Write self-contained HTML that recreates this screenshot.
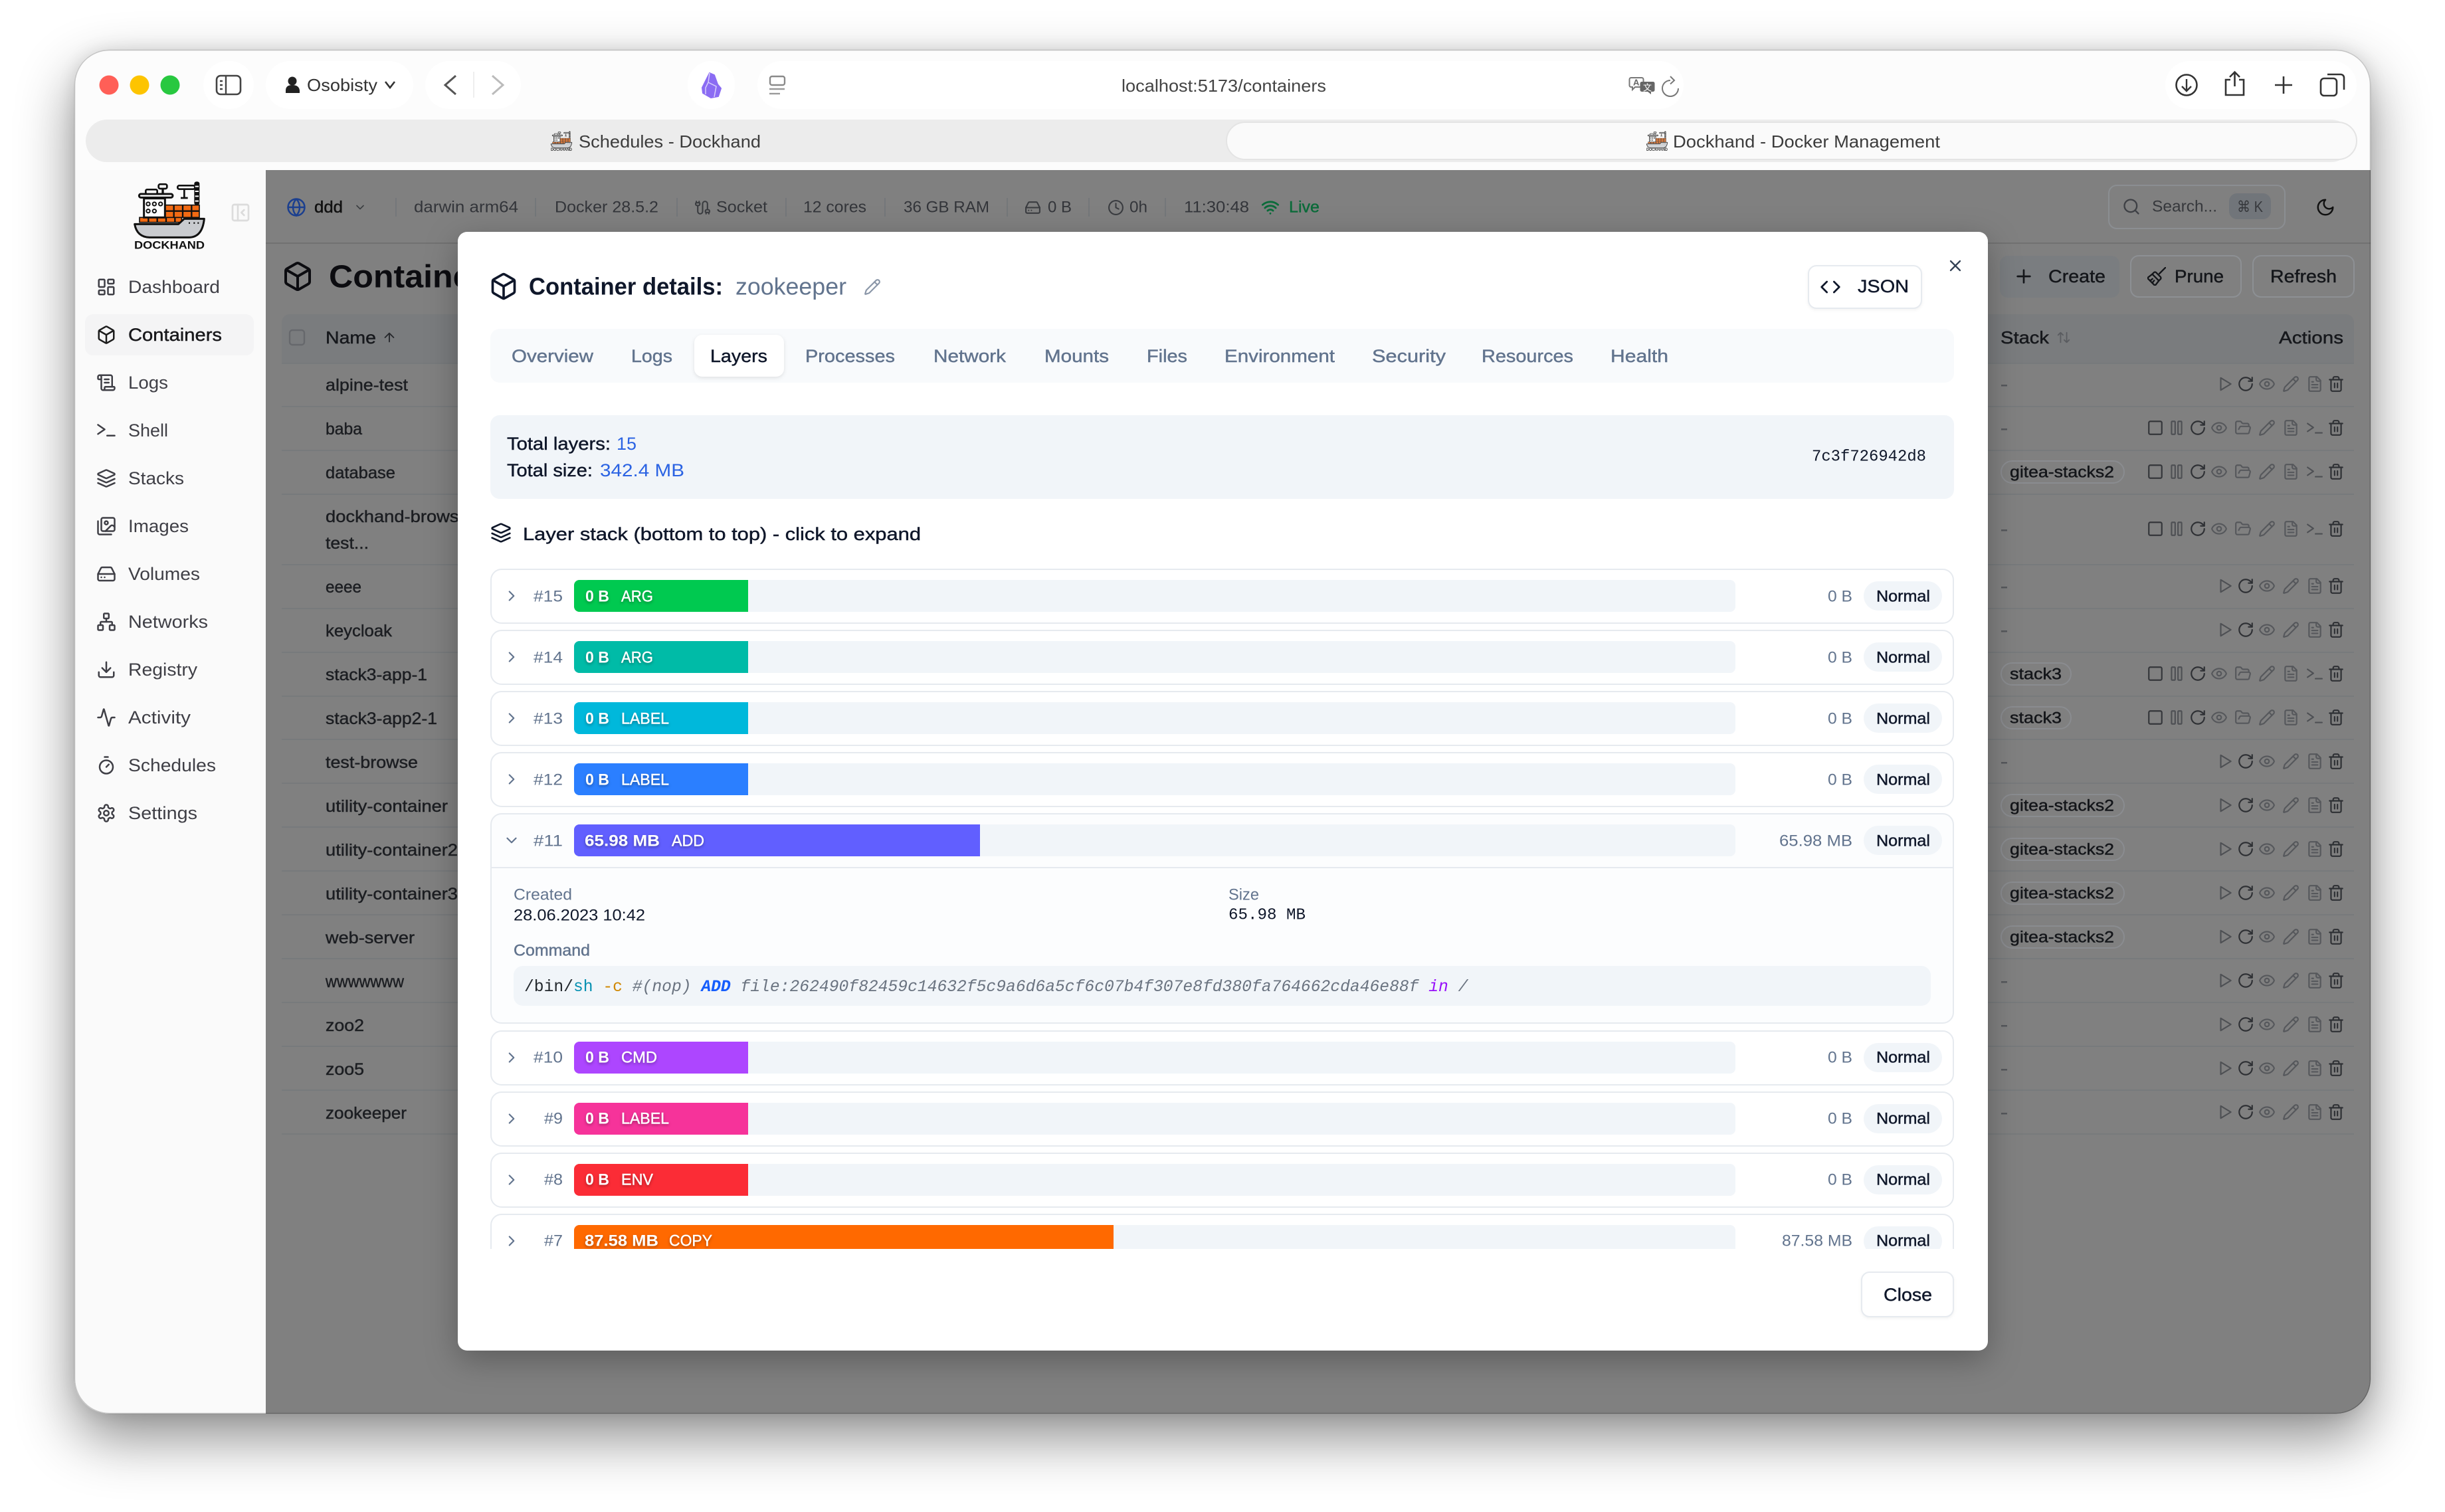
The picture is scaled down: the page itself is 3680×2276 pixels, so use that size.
<!DOCTYPE html>
<html lang="en"><head><meta charset="utf-8"><title>Dockhand - Docker Management</title>
<style>
html,body{margin:0;padding:0;background:#fff;width:3680px;height:2276px;overflow:hidden}
#shadow{position:absolute;left:112px;top:75px;width:3456px;height:2053px;border-radius:52px;box-shadow:0 36px 85px rgba(0,0,0,.45),0 0 26px rgba(0,0,0,.1)}
svg{position:absolute;left:0;top:0}
text{font-family:"Liberation Sans",sans-serif;dominant-baseline:central;fill:currentColor;white-space:pre}
.m{stroke:currentColor;stroke-width:.45px}
.b{font-weight:700}
.mono{font-family:"Liberation Mono",monospace}
.s27{font-size:27px}.s26{font-size:26px}.s25{font-size:25px}.s24{font-size:24px}.s23{font-size:23px}
.bar{filter:drop-shadow(0 2px 2px rgba(0,0,0,.32))}
</style></head><body>
<div id="shadow"></div>
<svg width="3680" height="2276" viewBox="0 0 3680 2276" xmlns="http://www.w3.org/2000/svg">
<defs>
<clipPath id="win"><rect x="112" y="75" width="3456" height="2053" rx="52"/></clipPath>
<clipPath id="list"><rect x="730" y="840" width="2220" height="1040"/></clipPath>
<symbol id="box" viewBox="0 0 24 24" fill="none" stroke-width="2" stroke-linecap="round" stroke-linejoin="round"><path d="M21 8a2 2 0 0 0-1-1.730l-7-4a2 2 0 0 0-2 0l-7 4A2 2 0 0 0 3 8v8a2 2 0 0 0 1 1.730l7 4a2 2 0 0 0 2 0l7-4A2 2 0 0 0 21 16Z"/><path d="m3.300 7 8.700 5 8.700-5"/><path d="M12 22V12"/></symbol>
<symbol id="dash" viewBox="0 0 24 24" fill="none" stroke-width="2" stroke-linejoin="round"><rect x="3" y="3" width="7" height="9" rx="1"/><rect x="14" y="3" width="7" height="5" rx="1"/><rect x="14" y="12" width="7" height="9" rx="1"/><rect x="3" y="16" width="7" height="5" rx="1"/></symbol>
<symbol id="scroll" viewBox="0 0 24 24" fill="none" stroke-width="2" stroke-linecap="round" stroke-linejoin="round"><path d="M15 12h-5M15 8h-5M19 17V5a2 2 0 0 0-2-2H4"/><path d="M8 21h12a2 2 0 0 0 2-2v-1a1 1 0 0 0-1-1H11a1 1 0 0 0-1 1v1a2 2 0 1 1-4 0V5a2 2 0 1 0-4 0v2a1 1 0 0 0 1 1h3"/></symbol>
<symbol id="term" viewBox="0 0 24 24" fill="none" stroke-width="2" stroke-linecap="round" stroke-linejoin="round"><path d="M2 6l8 5.500L2 17"/><path d="M13 19h9"/></symbol>
<symbol id="layers" viewBox="0 0 24 24" fill="none" stroke-width="2" stroke-linecap="round" stroke-linejoin="round"><path d="m12.830 2.180a2 2 0 0 0-1.660 0L2.600 6.080a1 1 0 0 0 0 1.830l8.580 3.910a2 2 0 0 0 1.660 0l8.580-3.900a1 1 0 0 0 0-1.830Z"/><path d="m22 17.650-9.170 4.160a2 2 0 0 1-1.660 0L2 17.650"/><path d="m22 12.650-9.170 4.160a2 2 0 0 1-1.660 0L2 12.650"/></symbol>
<symbol id="images" viewBox="0 0 24 24" fill="none" stroke-width="2" stroke-linecap="round" stroke-linejoin="round"><path d="M18 22H4a2 2 0 0 1-2-2V6"/><path d="m22 13-1.296-1.296a2.410 2.410 0 0 0-3.408 0L11 18"/><circle cx="12" cy="8" r="2"/><rect x="6" y="2" width="16" height="16" rx="2"/></symbol>
<symbol id="drive" viewBox="0 0 24 24" fill="none" stroke-width="2" stroke-linecap="round" stroke-linejoin="round"><path d="M22 12H2"/><path d="M5.450 5.110 2 12v6a2 2 0 0 0 2 2h16a2 2 0 0 0 2-2v-6l-3.450-6.890A2 2 0 0 0 16.760 4H7.240a2 2 0 0 0-1.790 1.110z"/><path d="M6 16h.01M10 16h.01"/></symbol>
<symbol id="net" viewBox="0 0 24 24" fill="none" stroke-width="2" stroke-linecap="round" stroke-linejoin="round"><rect x="16" y="16" width="6" height="6" rx="1"/><rect x="2" y="16" width="6" height="6" rx="1"/><rect x="9" y="2" width="6" height="6" rx="1"/><path d="M5 16v-3a1 1 0 0 1 1-1h12a1 1 0 0 1 1 1v3"/><path d="M12 12V8"/></symbol>
<symbol id="down" viewBox="0 0 24 24" fill="none" stroke-width="2" stroke-linecap="round" stroke-linejoin="round"><path d="M21 15v4a2 2 0 0 1-2 2H5a2 2 0 0 1-2-2v-4"/><path d="M7 10l5 5 5-5"/><path d="M12 15V3"/></symbol>
<symbol id="act" viewBox="0 0 24 24" fill="none" stroke-width="2" stroke-linecap="round" stroke-linejoin="round"><path d="M22 12h-2.480a2 2 0 0 0-1.930 1.460l-2.350 8.360a.25.25 0 0 1-.48 0L9.240 2.180a.25.25 0 0 0-.48 0l-2.350 8.360A2 2 0 0 1 4.490 12H2"/></symbol>
<symbol id="timer" viewBox="0 0 24 24" fill="none" stroke-width="2" stroke-linecap="round" stroke-linejoin="round"><path d="M10 2h4"/><path d="M12 14l3-3"/><circle cx="12" cy="14" r="8"/></symbol>
<symbol id="gear" viewBox="0 0 24 24" fill="none" stroke-width="2" stroke-linecap="round" stroke-linejoin="round"><path d="M12.220 2h-.44a2 2 0 0 0-2 2v.18a2 2 0 0 1-1 1.730l-.43.25a2 2 0 0 1-2 0l-.15-.08a2 2 0 0 0-2.730.73l-.22.38a2 2 0 0 0 .73 2.730l.15.1a2 2 0 0 1 1 1.720v.51a2 2 0 0 1-1 1.740l-.15.09a2 2 0 0 0-.73 2.730l.22.38a2 2 0 0 0 2.730.73l.15-.08a2 2 0 0 1 2 0l.43.25a2 2 0 0 1 1 1.730V20a2 2 0 0 0 2 2h.44a2 2 0 0 0 2-2v-.18a2 2 0 0 1 1-1.730l.43-.25a2 2 0 0 1 2 0l.15.08a2 2 0 0 0 2.730-.73l.22-.39a2 2 0 0 0-.73-2.730l-.15-.08a2 2 0 0 1-1-1.740v-.5a2 2 0 0 1 1-1.740l.15-.09a2 2 0 0 0 .73-2.730l-.22-.38a2 2 0 0 0-2.730-.73l-.15.08a2 2 0 0 1-2 0l-.43-.25a2 2 0 0 1-1-1.730V4a2 2 0 0 0-2-2z"/><circle cx="12" cy="12" r="3"/></symbol>
<symbol id="play" viewBox="0 0 24 24" fill="none" stroke-width="2" stroke-linejoin="round"><path d="M6 3.500 20 12 6 20.500z"/></symbol>
<symbol id="rot" viewBox="0 0 24 24" fill="none" stroke-width="2" stroke-linecap="round" stroke-linejoin="round"><path d="M21 12a9 9 0 1 1-9-9c2.520 0 4.930 1 6.740 2.740L21 8"/><path d="M21 3v5h-5"/></symbol>
<symbol id="eye" viewBox="0 0 24 24" fill="none" stroke-width="2" stroke-linecap="round" stroke-linejoin="round"><path d="M2.062 12.348a1 1 0 0 1 0-.696 10.750 10.750 0 0 1 19.876 0 1 1 0 0 1 0 .696 10.750 10.750 0 0 1-19.876 0"/><circle cx="12" cy="12" r="3"/></symbol>
<symbol id="pen" viewBox="0 0 24 24" fill="none" stroke-width="2" stroke-linecap="round" stroke-linejoin="round"><path d="M21.174 6.812a1 1 0 0 0-3.986-3.987L3.842 16.174a2 2 0 0 0-.5.83l-1.321 4.352a.5.5 0 0 0 .623.622l4.353-1.320a2 2 0 0 0 .83-.497z"/><path d="m15 5 4 4"/></symbol>
<symbol id="file" viewBox="0 0 24 24" fill="none" stroke-width="2" stroke-linecap="round" stroke-linejoin="round"><path d="M15 2H6a2 2 0 0 0-2 2v16a2 2 0 0 0 2 2h12a2 2 0 0 0 2-2V7Z"/><path d="M14 2v4a2 2 0 0 0 2 2h4"/><path d="M10 9H8M16 13H8M16 17H8"/></symbol>
<symbol id="trash" viewBox="0 0 24 24" fill="none" stroke-width="2" stroke-linecap="round" stroke-linejoin="round"><path d="M3 6h18M19 6v14c0 1-1 2-2 2H7c-1 0-2-1-2-2V6M8 6V4c0-1 1-2 2-2h4c1 0 2 1 2 2v2"/><path d="M10 11v6M14 11v6"/></symbol>
<symbol id="sq" viewBox="0 0 24 24" fill="none" stroke-width="2"><rect x="3" y="3" width="18" height="18" rx="2"/></symbol>
<symbol id="pause" viewBox="0 0 24 24" fill="none" stroke-width="2"><rect x="14" y="3" width="5" height="18" rx="1"/><rect x="5" y="3" width="5" height="18" rx="1"/></symbol>
<symbol id="folder" viewBox="0 0 24 24" fill="none" stroke-width="2" stroke-linecap="round" stroke-linejoin="round"><path d="m6 14 1.500-2.900A2 2 0 0 1 9.240 10H20a2 2 0 0 1 1.940 2.500l-1.540 6a2 2 0 0 1-1.950 1.500H4a2 2 0 0 1-2-2V5a2 2 0 0 1 2-2h3.900a2 2 0 0 1 1.690.9l.81 1.200a2 2 0 0 0 1.670.9H18a2 2 0 0 1 2 2v2"/></symbol>
<symbol id="search" viewBox="0 0 24 24" fill="none" stroke-width="2" stroke-linecap="round"><path d="m21 21-4.300-4.300"/><circle cx="11" cy="11" r="8"/></symbol>
<symbol id="moon" viewBox="0 0 24 24" fill="none" stroke-width="2" stroke-linejoin="round"><path d="M12 3a6 6 0 0 0 9 9 9 9 0 1 1-9-9Z"/></symbol>
<symbol id="plus" viewBox="0 0 24 24" fill="none" stroke-width="2" stroke-linecap="round"><path d="M5 12h14M12 5v14"/></symbol>
<symbol id="brush" viewBox="0 0 24 24" fill="none" stroke-width="2" stroke-linecap="round" stroke-linejoin="round"><g transform="rotate(45 12 12)"><path d="M12 -4V7"/><path d="M8 9h8a2 2 0 0 1 2 2v3H6v-3a2 2 0 0 1 2-2z"/><path d="M6 14l-1 8h14l-1-8"/><path d="M10 22l.5-4M14 22l-.5-4"/></g></symbol>
<symbol id="aup" viewBox="0 0 24 24" fill="none" stroke-width="2" stroke-linecap="round" stroke-linejoin="round"><path d="m5 12 7-7 7 7M12 19V5"/></symbol>
<symbol id="aud" viewBox="0 0 24 24" fill="none" stroke-width="2" stroke-linecap="round" stroke-linejoin="round"><path d="m21 16-4 4-4-4M17 20V4M3 8l4-4 4 4M7 4v16"/></symbol>
<symbol id="globe" viewBox="0 0 24 24" fill="none" stroke-width="2"><circle cx="12" cy="12" r="10"/><path d="M12 2a14.500 14.500 0 0 0 0 20 14.500 14.500 0 0 0 0-20M2 12h20"/></symbol>
<symbol id="chd" viewBox="0 0 24 24" fill="none" stroke-width="2" stroke-linecap="round" stroke-linejoin="round"><path d="m6 9 6 6 6-6"/></symbol>
<symbol id="chr" viewBox="0 0 24 24" fill="none" stroke-width="2" stroke-linecap="round" stroke-linejoin="round"><path d="m9 18 6-6-6-6"/></symbol>
<symbol id="x" viewBox="0 0 24 24" fill="none" stroke-width="2" stroke-linecap="round"><path d="M18 6 6 18M6 6l12 12"/></symbol>
<symbol id="code" viewBox="0 0 24 24" fill="none" stroke-width="2" stroke-linecap="round" stroke-linejoin="round"><path d="m16 18 6-6-6-6M8 6l-6 6 6 6"/></symbol>
<symbol id="wifi" viewBox="0 0 24 24" fill="none" stroke-width="2.400" stroke-linecap="round"><path d="M12 20h.01M2 8.820a15 15 0 0 1 20 0M5 12.859a10 10 0 0 1 14 0M8.500 16.429a5 5 0 0 1 7 0"/></symbol>
<symbol id="clock" viewBox="0 0 24 24" fill="none" stroke-width="2" stroke-linecap="round" stroke-linejoin="round"><circle cx="12" cy="12" r="10"/><path d="M12 6v6l4 2"/></symbol>
<symbol id="cable" viewBox="0 0 24 24" fill="none" stroke-width="2" stroke-linecap="round" stroke-linejoin="round"><path d="M17 21v-2a1 1 0 0 1-1-1v-1a2 2 0 0 1 2-2h2a2 2 0 0 1 2 2v1a1 1 0 0 1-1 1M19 15V6.500a3.500 3.500 0 0 0-7 0v11a3.500 3.500 0 0 1-7 0V9M21 21v-2h-4M3 5h4V3M7 5a1 1 0 0 1 1 1v1a2 2 0 0 1-2 2H4a2 2 0 0 1-2-2V6a1 1 0 0 1 1-1V3"/></symbol>
<symbol id="panel" viewBox="0 0 24 24" fill="none" stroke-width="2" stroke-linecap="round" stroke-linejoin="round"><rect x="3" y="3" width="18" height="18" rx="2"/><path d="M9 3v18M16 15l-3-3 3-3"/></symbol>

<symbol id="ship" viewBox="0 0 660 450">
<g fill="#f26a13" stroke="#111" stroke-width="5"><rect x="175" y="176" width="155" height="56"/><rect x="60" y="232" width="190" height="22"/></g>
<path d="M175 203h155M215 176v56M255 176v56M295 176v56M100 232v22M140 232v22M180 232v22M220 232v22" stroke="#111" stroke-width="7"/>
<rect x="80" y="146" width="95" height="86" fill="#fff" stroke="#111" stroke-width="9"/>
<circle cx="99" cy="171" r="8" fill="#fff" stroke="#111" stroke-width="6"/><circle cx="127" cy="171" r="8" fill="#fff" stroke="#111" stroke-width="6"/><circle cx="155" cy="171" r="8" fill="#fff" stroke="#111" stroke-width="6"/><circle cx="99" cy="203" r="8" fill="#fff" stroke="#111" stroke-width="6"/><circle cx="127" cy="203" r="8" fill="#fff" stroke="#111" stroke-width="6"/>
<rect x="58" y="126" width="152" height="16" rx="8" fill="#fff" stroke="#111" stroke-width="9"/>
<rect x="88" y="106" width="52" height="20" rx="6" fill="#fff" stroke="#111" stroke-width="8"/>
<path d="M165 126v-22" stroke="#111" stroke-width="10"/><rect x="146" y="82" width="38" height="20" rx="7" fill="#fff" stroke="#111" stroke-width="8"/>
<rect x="232" y="88" width="78" height="16" rx="7" fill="#fff" stroke="#111" stroke-width="8"/>
<path d="M262 104v40M246 144h32" stroke="#111" stroke-width="8"/>
<rect x="307" y="70" width="24" height="106" rx="10" fill="#111"/><path d="M311 92h16M311 114h16M311 136h16M311 158h16" stroke="#fff" stroke-width="6"/>
<path d="M38 262H236L262 238H352Q344 320 285 322H105Q48 320 38 262Z" fill="#c9cbcf" stroke="#111" stroke-width="9" stroke-linejoin="round"/>
<path d="M282 257h6M304 257h6M322 257h6" stroke="#111" stroke-width="7"/>
</symbol>

<g id="stopped">
<use href="#play" x="3336" y="-13" width="26" height="26" stroke="#4e5054"/>
<use href="#rot" x="3367" y="-13" width="26" height="26" stroke="#2e3034"/>
<use href="#eye" x="3399" y="-13" width="26" height="26" stroke="#56585c"/>
<use href="#pen" x="3435" y="-13" width="26" height="26" stroke="#56585c"/>
<use href="#file" x="3471" y="-13" width="26" height="26" stroke="#56585c"/>
<use href="#trash" x="3503" y="-13" width="26" height="26" stroke="#2e3034"/>
</g>
<g id="running">
<use href="#sq" x="3231" y="-13" width="26" height="26" stroke="#34363a"/>
<use href="#pause" x="3263" y="-13" width="26" height="26" stroke="#4e5054"/>
<use href="#rot" x="3295" y="-13" width="26" height="26" stroke="#2e3034"/>
<use href="#eye" x="3327" y="-13" width="26" height="26" stroke="#56585c"/>
<use href="#folder" x="3363" y="-13" width="26" height="26" stroke="#56585c"/>
<use href="#pen" x="3399" y="-13" width="26" height="26" stroke="#56585c"/>
<use href="#file" x="3435" y="-13" width="26" height="26" stroke="#56585c"/>
<use href="#term" x="3471" y="-13" width="26" height="26" stroke="#4e5054"/>
<use href="#trash" x="3503" y="-13" width="26" height="26" stroke="#2e3034"/>
</g>
</defs>

<g clip-path="url(#win)">
<!-- window chrome -->
<rect x="112" y="75" width="3456" height="2053" fill="#fff"/>
<rect x="112" y="75" width="3456" height="181" fill="#fcfcfc"/>
<g fill="#fff"><rect x="306" y="92" width="76" height="72" rx="36"/><rect x="400" y="92" width="222" height="72" rx="36"/><rect x="640" y="92" width="144" height="72" rx="36"/><rect x="1035" y="92" width="71" height="72" rx="35"/><rect x="1140" y="92" width="1394" height="72" rx="36"/><rect x="3259" y="92" width="288" height="72" rx="36"/></g>
<circle cx="164" cy="128" r="14.500" fill="#ff5f57"/><circle cx="210" cy="128" r="14.500" fill="#fdc400"/><circle cx="256" cy="128" r="14.500" fill="#28c840"/>
<rect x="326" y="114" width="36" height="28" rx="6" fill="none" stroke="#444" stroke-width="2.600"/><path d="M340 114v28M331 122h4M331 128h4M331 134h4" stroke="#444" stroke-width="2.400"/>
<circle cx="440" cy="122" r="6.500" fill="#222"/><path d="M430 140v-4q0-8 10-8t11 8v4z" fill="#222"/>
<text x="462" y="128" class="s26" style="color:#333" textLength="106" lengthAdjust="spacingAndGlyphs">Osobisty</text>
<path d="M580 123l7 9 7-9" fill="none" stroke="#333" stroke-width="2.600"/>
<path d="M686 114l-16 14 16 14" fill="none" stroke="#555" stroke-width="3"/><path d="M713 108v39" stroke="#eee" stroke-width="2"/><path d="M741 114l16 14-16 14" fill="none" stroke="#bbb" stroke-width="3"/>
<path d="M1068 110L1075 113L1080 127L1085 133L1081 145L1070 147L1058 140L1057 132L1062 122Z" fill="#8b6cf3" stroke="#8b6cf3" stroke-width="2" stroke-linejoin="round"/><path d="M1068 110L1066 124L1078 130L1075 146M1066 124L1062 132L1062 142" fill="none" stroke="#d8cffb" stroke-width="1.500"/>
<rect x="1159" y="115" width="22" height="13" rx="3" fill="none" stroke="#8a8a8a" stroke-width="2.400"/><path d="M1158 134h23" stroke="#9a9a9a" stroke-width="2.400"/><path d="M1158 141h16" stroke="#9a9a9a" stroke-width="2.400"/>
<text x="1688" y="129" class="s26" style="color:#444" textLength="308" lengthAdjust="spacingAndGlyphs">localhost:5173/containers</text>
<path d="M2455 117h16a2.500 2.500 0 0 1 2.500 2.500v9a2.500 2.500 0 0 1-2.500 2.500h-10l-4 4v-4h-2a2.500 2.500 0 0 1-2.500-2.500v-9a2.500 2.500 0 0 1 2.500-2.500z" fill="#fff" stroke="#777" stroke-width="2"/>
<text x="2458" y="124" style="color:#666;font-size:13px" class="b">A</text>
<path d="M2471 123h17a2.500 2.500 0 0 1 2.500 2.500v10a2.500 2.500 0 0 1-2.500 2.500h-3v4l-5-4h-9a2.500 2.500 0 0 1-2.500-2.500v-10a2.500 2.500 0 0 1 2.500-2.500z" fill="#666"/>
<text x="2473" y="131" style="color:#fff;font-size:13px;font-family:'Noto Sans CJK SC',sans-serif">文</text>
<path d="M2514 121a12 12 0 1 0 12 12" fill="none" stroke="#777" stroke-width="2"/><path d="M2514 115l6 6-6 5.500" fill="none" stroke="#777" stroke-width="2"/>
<circle cx="3291" cy="128" r="15.500" fill="none" stroke="#333" stroke-width="2.600"/><path d="M3291 119v17M3284 130l7 7 7-7" fill="none" stroke="#333" stroke-width="2.400"/>
<path d="M3357 120h-7v23h27v-23h-7M3363.500 130v-21M3356 116l7.500-7.500 7.500 7.500" fill="none" stroke="#333" stroke-width="2.600"/>
<path d="M3437 115v26M3424 128h26" stroke="#333" stroke-width="2.600"/>
<rect x="3493" y="118" width="24" height="26" rx="5" fill="none" stroke="#333" stroke-width="2.600"/><path d="M3503 112h20a5 5 0 0 1 5 5v18" fill="none" stroke="#333" stroke-width="2.600"/>
<rect x="129" y="180" width="3411" height="64" rx="32" fill="#ececec"/>
<rect x="1846" y="184" width="1701" height="56" rx="28" fill="#fafafa" stroke="#e4e4e4" stroke-width="2"/>
<use href="#ship" x="825.500" y="190.500" width="66" height="45" opacity=".8"/>
<text x="829" y="225.500" class="b" style="color:#333;font-size:6.500px" textLength="32" lengthAdjust="spacingAndGlyphs">DOCKHAND</text>
<text x="871" y="213" class="s26" style="color:#3c3c3c" textLength="274" lengthAdjust="spacingAndGlyphs">Schedules - Dockhand</text>
<use href="#ship" x="2474.500" y="190.500" width="66" height="45" opacity=".8"/>
<text x="2478" y="225.500" class="b" style="color:#333;font-size:6.500px" textLength="32" lengthAdjust="spacingAndGlyphs">DOCKHAND</text>
<text x="2518" y="213" class="s26" style="color:#3c3c3c" textLength="402" lengthAdjust="spacingAndGlyphs">Dockhand - Docker Management</text>

<!-- sidebar -->
<rect x="112" y="256" width="288" height="1872" fill="#fafafa"/>
<use href="#ship" x="190" y="250" width="220" height="150"/>
<text x="202" y="369" class="b" style="color:#111;font-size:17px" textLength="106" lengthAdjust="spacingAndGlyphs">DOCKHAND</text>
<use href="#panel" x="346" y="304" width="32" height="32" stroke="#dcdcdc"/>
<rect x="128" y="473" width="254" height="62" rx="12" fill="#f4f4f5"/>
<g stroke="#3f3f46">
<use href="#dash" x="145" y="417" width="30" height="30"/>
<use href="#box" x="145" y="489" width="30" height="30" stroke="#1c1c1c"/>
<use href="#scroll" x="145" y="561" width="30" height="30"/>
<use href="#term" x="145" y="632" width="30" height="30"/>
<use href="#layers" x="145" y="705" width="30" height="30"/>
<use href="#images" x="145" y="777" width="30" height="30"/>
<use href="#drive" x="145" y="849" width="30" height="30"/>
<use href="#net" x="145" y="921" width="30" height="30"/>
<use href="#down" x="145" y="993" width="30" height="30"/>
<use href="#act" x="145" y="1065" width="30" height="30"/>
<use href="#timer" x="145" y="1137" width="30" height="30"/>
<use href="#gear" x="145" y="1209" width="30" height="30"/>
</g>
<g class="s27" style="color:#3f3f46">
<text x="193" y="432" textLength="138" lengthAdjust="spacingAndGlyphs">Dashboard</text>
<text x="193" y="504" class="m" style="color:#18181b" textLength="141" lengthAdjust="spacingAndGlyphs">Containers</text>
<text x="193" y="576" textLength="60" lengthAdjust="spacingAndGlyphs">Logs</text>
<text x="193" y="648" textLength="60" lengthAdjust="spacingAndGlyphs">Shell</text>
<text x="193" y="720" textLength="84" lengthAdjust="spacingAndGlyphs">Stacks</text>
<text x="193" y="792" textLength="91" lengthAdjust="spacingAndGlyphs">Images</text>
<text x="193" y="864" textLength="108" lengthAdjust="spacingAndGlyphs">Volumes</text>
<text x="193" y="936" textLength="120" lengthAdjust="spacingAndGlyphs">Networks</text>
<text x="193" y="1008" textLength="104" lengthAdjust="spacingAndGlyphs">Registry</text>
<text x="193" y="1080" textLength="94" lengthAdjust="spacingAndGlyphs">Activity</text>
<text x="193" y="1152" textLength="132" lengthAdjust="spacingAndGlyphs">Schedules</text>
<text x="193" y="1224" textLength="104" lengthAdjust="spacingAndGlyphs">Settings</text>
</g>

<!-- dimmed main -->
<rect x="400" y="256" width="3168" height="1872" fill="#808080"/>
<rect x="400" y="365" width="3168" height="2" fill="#717171"/>
<use href="#globe" x="431" y="297" width="30" height="30" stroke="#1b3f8f"/>
<text x="473" y="312" class="s25 m" style="color:#111" textLength="43" lengthAdjust="spacingAndGlyphs">ddd</text>
<use href="#chd" x="532" y="302" width="20" height="20" stroke="#3c3e42"/>
<g fill="#74777a"><rect x="595" y="298" width="2" height="28"/><rect x="805" y="298" width="2" height="28"/><rect x="1018" y="298" width="2" height="28"/><rect x="1182" y="298" width="2" height="28"/><rect x="1331" y="298" width="2" height="28"/><rect x="1515" y="298" width="2" height="28"/><rect x="1638" y="298" width="2" height="28"/><rect x="1753" y="298" width="2" height="28"/></g>
<g class="s24" style="color:#33353a">
<text x="623" y="312" textLength="157" lengthAdjust="spacingAndGlyphs">darwin arm64</text>
<text x="835" y="312" textLength="156" lengthAdjust="spacingAndGlyphs">Docker 28.5.2</text>
<text x="1078" y="312" textLength="77" lengthAdjust="spacingAndGlyphs">Socket</text>
<text x="1209" y="312" textLength="95" lengthAdjust="spacingAndGlyphs">12 cores</text>
<text x="1360" y="312" textLength="129" lengthAdjust="spacingAndGlyphs">36 GB RAM</text>
<text x="1577" y="312" textLength="36" lengthAdjust="spacingAndGlyphs">0 B</text>
<text x="1700" y="312" textLength="27" lengthAdjust="spacingAndGlyphs">0h</text>
<text x="1782" y="312" textLength="98" lengthAdjust="spacingAndGlyphs">11:30:48</text>
</g>
<use href="#cable" x="1045" y="300" width="25" height="25" stroke="#3a3c40"/>
<use href="#drive" x="1542" y="300" width="25" height="25" stroke="#3a3c40"/>
<use href="#clock" x="1667" y="300" width="25" height="25" stroke="#3a3c40"/>
<use href="#wifi" x="1898" y="298" width="28" height="28" stroke="#0b6b3a"/>
<text x="1940" y="312" class="s24 m" style="color:#0b6b3a" textLength="46" lengthAdjust="spacingAndGlyphs">Live</text>
<rect x="3174" y="279" width="265" height="65" rx="12" fill="none" stroke="#8b8e92" stroke-width="2"/>
<use href="#search" x="3194" y="297" width="28" height="28" stroke="#3e4045"/>
<text x="3239" y="311" class="s24" style="color:#36383c" textLength="98" lengthAdjust="spacingAndGlyphs">Search...</text>
<rect x="3355" y="291" width="63" height="39" rx="12" fill="#71757a"/>
<text x="3367" y="311" class="s23" style="color:#36383c" textLength="39" lengthAdjust="spacingAndGlyphs">⌘ K</text>
<use href="#moon" x="3485" y="297" width="30" height="30" stroke="#111"/>

<use href="#box" x="424" y="392" width="48" height="48" stroke="#0c0c10"/>
<text x="495" y="417" class="b" style="color:#0c0c10;font-size:48px" textLength="262" lengthAdjust="spacingAndGlyphs">Containers</text>

<!-- right buttons -->
<rect x="3010" y="385" width="180" height="63" rx="12" fill="#7a7d80"/>
<use href="#plus" x="3030" y="400" width="32" height="32" stroke="#14161a"/>
<text x="3083" y="416" class="s27 m" style="color:#14161a" textLength="86" lengthAdjust="spacingAndGlyphs">Create</text>
<rect x="3207" y="385" width="166" height="62" rx="12" fill="none" stroke="#8d9094" stroke-width="2"/>
<use href="#brush" x="3232" y="402" width="28" height="28" stroke="#14161a"/>
<text x="3273" y="416" class="s27 m" style="color:#14161a" textLength="74" lengthAdjust="spacingAndGlyphs">Prune</text>
<rect x="3391" y="385" width="152" height="62" rx="12" fill="none" stroke="#8d9094" stroke-width="2"/>
<text x="3417" y="416" class="s27 m" style="color:#14161a" textLength="100" lengthAdjust="spacingAndGlyphs">Refresh</text>

<!-- table -->
<path d="M424 485a12 12 0 0 1 12-12H3531a12 12 0 0 1 12 12V546H424z" fill="#7a7c7e"/>
<rect x="436" y="497" width="22" height="22" rx="4" fill="none" stroke="#66686c" stroke-width="2.400"/>
<text x="490" y="508" class="s26 m" style="color:#16181c" textLength="76" lengthAdjust="spacingAndGlyphs">Name</text>
<use href="#aup" x="575" y="497" width="22" height="22" stroke="#26282c"/>
<text x="3011" y="508" class="s26 m" style="color:#16181c" textLength="73" lengthAdjust="spacingAndGlyphs">Stack</text>
<use href="#aud" x="3095" y="497" width="22" height="22" stroke="#5a5c60"/>
<text x="3430" y="508" class="s26 m" style="color:#16181c" textLength="97" lengthAdjust="spacingAndGlyphs">Actions</text>
<g fill="#777a7c"><rect x="424" y="546" width="3119" height="2"/><rect x="424" y="611" width="3119" height="2"/><rect x="424" y="677" width="3119" height="2"/><rect x="424" y="743" width="3119" height="2"/><rect x="424" y="849" width="3119" height="2"/><rect x="424" y="915" width="3119" height="2"/><rect x="424" y="981" width="3119" height="2"/><rect x="424" y="1047" width="3119" height="2"/><rect x="424" y="1112" width="3119" height="2"/><rect x="424" y="1178" width="3119" height="2"/><rect x="424" y="1244" width="3119" height="2"/><rect x="424" y="1310" width="3119" height="2"/><rect x="424" y="1376" width="3119" height="2"/><rect x="424" y="1442" width="3119" height="2"/><rect x="424" y="1508" width="3119" height="2"/><rect x="424" y="1574" width="3119" height="2"/><rect x="424" y="1640" width="3119" height="2"/><rect x="424" y="1706" width="3119" height="2"/></g>
<g class="s25 m" style="color:#1c1e22">
<text x="490" y="580" textLength="124" lengthAdjust="spacingAndGlyphs">alpine-test</text>
<text x="490" y="646" textLength="55" lengthAdjust="spacingAndGlyphs">baba</text>
<text x="490" y="712" textLength="105" lengthAdjust="spacingAndGlyphs">database</text>
<text x="490" y="778" textLength="234" lengthAdjust="spacingAndGlyphs">dockhand-browser-</text>
<text x="490" y="818" textLength="65" lengthAdjust="spacingAndGlyphs">test...</text>
<text x="490" y="884" textLength="54" lengthAdjust="spacingAndGlyphs">eeee</text>
<text x="490" y="950" textLength="100" lengthAdjust="spacingAndGlyphs">keycloak</text>
<text x="490" y="1016" textLength="153" lengthAdjust="spacingAndGlyphs">stack3-app-1</text>
<text x="490" y="1082" textLength="168" lengthAdjust="spacingAndGlyphs">stack3-app2-1</text>
<text x="490" y="1148" textLength="139" lengthAdjust="spacingAndGlyphs">test-browse</text>
<text x="490" y="1214" textLength="184" lengthAdjust="spacingAndGlyphs">utility-container</text>
<text x="490" y="1280" textLength="199" lengthAdjust="spacingAndGlyphs">utility-container2</text>
<text x="490" y="1346" textLength="199" lengthAdjust="spacingAndGlyphs">utility-container3</text>
<text x="490" y="1412" textLength="134" lengthAdjust="spacingAndGlyphs">web-server</text>
<text x="490" y="1478" textLength="118" lengthAdjust="spacingAndGlyphs">wwwwwww</text>
<text x="490" y="1544" textLength="58" lengthAdjust="spacingAndGlyphs">zoo2</text>
<text x="490" y="1610" textLength="58" lengthAdjust="spacingAndGlyphs">zoo5</text>
<text x="490" y="1676" textLength="122" lengthAdjust="spacingAndGlyphs">zookeeper</text>
</g>
<use href="#stopped" y="578"/><use href="#running" y="644"/><use href="#running" y="710"/><use href="#running" y="796"/><use href="#stopped" y="882"/><use href="#stopped" y="948"/><use href="#running" y="1014"/><use href="#running" y="1080"/><use href="#stopped" y="1146"/><use href="#stopped" y="1212"/><use href="#stopped" y="1278"/><use href="#stopped" y="1344"/><use href="#stopped" y="1410"/><use href="#stopped" y="1476"/><use href="#stopped" y="1542"/><use href="#stopped" y="1608"/><use href="#stopped" y="1674"/>
<g fill="#56585c"><rect x="3012" y="579" width="9" height="2.500"/><rect x="3012" y="645" width="9" height="2.500"/><rect x="3012" y="797" width="9" height="2.500"/><rect x="3012" y="883" width="9" height="2.500"/><rect x="3012" y="949" width="9" height="2.500"/><rect x="3012" y="1147" width="9" height="2.500"/><rect x="3012" y="1477" width="9" height="2.500"/><rect x="3012" y="1543" width="9" height="2.500"/><rect x="3012" y="1609" width="9" height="2.500"/><rect x="3012" y="1675" width="9" height="2.500"/></g>
<g fill="none" stroke="#8a8c90" stroke-width="2"><rect x="3012" y="694" width="185" height="33" rx="16.500"/><rect x="3012" y="1196" width="185" height="33" rx="16.500"/><rect x="3012" y="1262" width="185" height="33" rx="16.500"/><rect x="3012" y="1328" width="185" height="33" rx="16.500"/><rect x="3012" y="1394" width="185" height="33" rx="16.500"/><rect x="3012" y="998" width="105" height="33" rx="16.500"/><rect x="3012" y="1064" width="105" height="33" rx="16.500"/></g>
<g class="s24 m" style="color:#14161a">
<text x="3025" y="711" textLength="157" lengthAdjust="spacingAndGlyphs">gitea-stacks2</text>
<text x="3025" y="1213" textLength="157" lengthAdjust="spacingAndGlyphs">gitea-stacks2</text>
<text x="3025" y="1279" textLength="157" lengthAdjust="spacingAndGlyphs">gitea-stacks2</text>
<text x="3025" y="1345" textLength="157" lengthAdjust="spacingAndGlyphs">gitea-stacks2</text>
<text x="3025" y="1411" textLength="157" lengthAdjust="spacingAndGlyphs">gitea-stacks2</text>
<text x="3025" y="1015" textLength="78" lengthAdjust="spacingAndGlyphs">stack3</text>
<text x="3025" y="1081" textLength="78" lengthAdjust="spacingAndGlyphs">stack3</text>
</g>

<!-- modal -->
<rect x="689" y="349" width="2303" height="1684" rx="14" fill="#fff" style="filter:drop-shadow(0 14px 24px rgba(0,0,0,.28))"/>
<use href="#box" x="736" y="409" width="44" height="44" stroke="#0f172a"/>
<text x="796" y="431" class="b" style="color:#0f172a;font-size:36px" textLength="292" lengthAdjust="spacingAndGlyphs">Container details:</text>
<text x="1107" y="431" style="color:#62748e;font-size:36px" textLength="167" lengthAdjust="spacingAndGlyphs">zookeeper</text>
<use href="#pen" x="1300" y="419" width="26" height="26" stroke="#8a96a8"/>
<rect x="2722" y="400" width="170" height="64" rx="12" fill="#fff" stroke="#e6eaef" stroke-width="2" style="filter:drop-shadow(0 2px 2px rgba(0,0,0,.05))"/>
<use href="#code" x="2739" y="416" width="32" height="32" stroke="#0f172a"/>
<text x="2796" y="431" class="s27 m" style="color:#0f172a" textLength="77" lengthAdjust="spacingAndGlyphs">JSON</text>
<use href="#x" x="2929" y="386" width="28" height="28" stroke="#334155"/>

<rect x="738" y="495" width="2203" height="81" rx="14" fill="#f8fafc"/>
<rect x="1045" y="504" width="135" height="63" rx="12" fill="#fff" style="filter:drop-shadow(0 2px 3px rgba(0,0,0,.1))"/>
<g class="s27 m" style="color:#62748e">
<text x="770" y="536" textLength="123" lengthAdjust="spacingAndGlyphs">Overview</text>
<text x="950" y="536" textLength="62" lengthAdjust="spacingAndGlyphs">Logs</text>
<text x="1069" y="536" style="color:#0f172a" textLength="86" lengthAdjust="spacingAndGlyphs">Layers</text>
<text x="1212" y="536" textLength="135" lengthAdjust="spacingAndGlyphs">Processes</text>
<text x="1405" y="536" textLength="109" lengthAdjust="spacingAndGlyphs">Network</text>
<text x="1572" y="536" textLength="97" lengthAdjust="spacingAndGlyphs">Mounts</text>
<text x="1726" y="536" textLength="61" lengthAdjust="spacingAndGlyphs">Files</text>
<text x="1843" y="536" textLength="166" lengthAdjust="spacingAndGlyphs">Environment</text>
<text x="2065" y="536" textLength="111" lengthAdjust="spacingAndGlyphs">Security</text>
<text x="2230" y="536" textLength="138" lengthAdjust="spacingAndGlyphs">Resources</text>
<text x="2424" y="536" textLength="87" lengthAdjust="spacingAndGlyphs">Health</text>
</g>
<rect x="738" y="625" width="2203" height="126" rx="14" fill="#f1f5f9"/>
<g class="s27">
<text x="763" y="668" class="m" style="color:#0f172a" textLength="156" lengthAdjust="spacingAndGlyphs">Total layers:</text>
<text x="928" y="668" style="color:#2b63e3" textLength="30" lengthAdjust="spacingAndGlyphs">15</text>
<text x="763" y="708" class="m" style="color:#0f172a" textLength="129" lengthAdjust="spacingAndGlyphs">Total size:</text>
<text x="903" y="708" style="color:#2b63e3" textLength="127" lengthAdjust="spacingAndGlyphs">342.4 MB</text>
</g>
<text x="2727" y="688" class="mono s24" style="color:#0f172a" textLength="172" lengthAdjust="spacingAndGlyphs">7c3f726942d8</text>
<use href="#layers" x="738" y="786" width="32" height="32" stroke="#0f172a"/>
<text x="787" y="804" class="s27 m" style="color:#0f172a" textLength="599" lengthAdjust="spacingAndGlyphs">Layer stack (bottom to top) - click to expand</text>

<g clip-path="url(#list)">
<g fill="#fff" stroke="#e6eaef" stroke-width="2">
<rect x="739" y="857" width="2201" height="81" rx="16"/><rect x="739" y="949" width="2201" height="81" rx="16"/><rect x="739" y="1041" width="2201" height="81" rx="16"/><rect x="739" y="1133" width="2201" height="81" rx="16"/>
<rect x="739" y="1225" width="2201" height="315" rx="16" fill="#fcfdfe"/>
<rect x="739" y="1552" width="2201" height="81" rx="16"/><rect x="739" y="1644" width="2201" height="81" rx="16"/><rect x="739" y="1736" width="2201" height="81" rx="16"/><rect x="739" y="1828" width="2201" height="81" rx="16"/>
</g>
<rect x="739" y="1305" width="2201" height="2" fill="#e6eaef"/>
<g fill="#f1f5f9">
<rect x="864" y="873" width="1748" height="48" rx="8"/><rect x="864" y="965" width="1748" height="48" rx="8"/><rect x="864" y="1057" width="1748" height="48" rx="8"/><rect x="864" y="1149" width="1748" height="48" rx="8"/><rect x="864" y="1241" width="1748" height="48" rx="8"/><rect x="864" y="1568" width="1748" height="48" rx="8"/><rect x="864" y="1660" width="1748" height="48" rx="8"/><rect x="864" y="1752" width="1748" height="48" rx="8"/><rect x="864" y="1844" width="1748" height="48" rx="8"/>
<rect x="2805" y="875" width="118" height="44" rx="22"/><rect x="2805" y="967" width="118" height="44" rx="22"/><rect x="2805" y="1059" width="118" height="44" rx="22"/><rect x="2805" y="1151" width="118" height="44" rx="22"/><rect x="2805" y="1243" width="118" height="44" rx="22"/><rect x="2805" y="1570" width="118" height="44" rx="22"/><rect x="2805" y="1662" width="118" height="44" rx="22"/><rect x="2805" y="1754" width="118" height="44" rx="22"/><rect x="2805" y="1846" width="118" height="44" rx="22"/>
</g>
<path d="M872 873H1126V921H872a8 8 0 0 1-8-8V881a8 8 0 0 1 8-8z" fill="#00c950"/>
<path d="M872 965H1126V1013H872a8 8 0 0 1-8-8V973a8 8 0 0 1 8-8z" fill="#00bba7"/>
<path d="M872 1057H1126V1105H872a8 8 0 0 1-8-8V1065a8 8 0 0 1 8-8z" fill="#00b8db"/>
<path d="M872 1149H1126V1197H872a8 8 0 0 1-8-8V1157a8 8 0 0 1 8-8z" fill="#2b7fff"/>
<path d="M872 1241H1475V1289H872a8 8 0 0 1-8-8V1249a8 8 0 0 1 8-8z" fill="#615fff"/>
<path d="M872 1568H1126V1616H872a8 8 0 0 1-8-8V1576a8 8 0 0 1 8-8z" fill="#ad46ff"/>
<path d="M872 1660H1126V1708H872a8 8 0 0 1-8-8V1668a8 8 0 0 1 8-8z" fill="#f6339a"/>
<path d="M872 1752H1126V1800H872a8 8 0 0 1-8-8V1760a8 8 0 0 1 8-8z" fill="#fb2c36"/>
<path d="M872 1844H1676V1892H872a8 8 0 0 1-8-8V1852a8 8 0 0 1 8-8z" fill="#ff6900"/>
<g stroke="#62748e">
<use href="#chr" x="757" y="884" width="26" height="26"/><use href="#chr" x="757" y="976" width="26" height="26"/><use href="#chr" x="757" y="1068" width="26" height="26"/><use href="#chr" x="757" y="1160" width="26" height="26"/><use href="#chd" x="757" y="1252" width="26" height="26"/><use href="#chr" x="757" y="1579" width="26" height="26"/><use href="#chr" x="757" y="1671" width="26" height="26"/><use href="#chr" x="757" y="1763" width="26" height="26"/><use href="#chr" x="757" y="1855" width="26" height="26"/>
</g>
<g class="s24" style="color:#62748e">
<text x="803" y="898" textLength="44" lengthAdjust="spacingAndGlyphs">#15</text><text x="803" y="990" textLength="44" lengthAdjust="spacingAndGlyphs">#14</text><text x="803" y="1082" textLength="44" lengthAdjust="spacingAndGlyphs">#13</text><text x="803" y="1174" textLength="44" lengthAdjust="spacingAndGlyphs">#12</text><text x="803" y="1266" textLength="44" lengthAdjust="spacingAndGlyphs">#11</text><text x="803" y="1592" textLength="44" lengthAdjust="spacingAndGlyphs">#10</text><text x="819" y="1684" textLength="28" lengthAdjust="spacingAndGlyphs">#9</text><text x="819" y="1776" textLength="28" lengthAdjust="spacingAndGlyphs">#8</text><text x="819" y="1868" textLength="28" lengthAdjust="spacingAndGlyphs">#7</text>
<text x="2751" y="898" textLength="37" lengthAdjust="spacingAndGlyphs">0 B</text><text x="2751" y="990" textLength="37" lengthAdjust="spacingAndGlyphs">0 B</text><text x="2751" y="1082" textLength="37" lengthAdjust="spacingAndGlyphs">0 B</text><text x="2751" y="1174" textLength="37" lengthAdjust="spacingAndGlyphs">0 B</text><text x="2678" y="1266" textLength="110" lengthAdjust="spacingAndGlyphs">65.98 MB</text><text x="2751" y="1592" textLength="37" lengthAdjust="spacingAndGlyphs">0 B</text><text x="2751" y="1684" textLength="37" lengthAdjust="spacingAndGlyphs">0 B</text><text x="2751" y="1776" textLength="37" lengthAdjust="spacingAndGlyphs">0 B</text><text x="2682" y="1868" textLength="106" lengthAdjust="spacingAndGlyphs">87.58 MB</text>
</g>
<g class="s24 m" style="color:#0f172a">
<text x="2824" y="898" textLength="81" lengthAdjust="spacingAndGlyphs">Normal</text><text x="2824" y="990" textLength="81" lengthAdjust="spacingAndGlyphs">Normal</text><text x="2824" y="1082" textLength="81" lengthAdjust="spacingAndGlyphs">Normal</text><text x="2824" y="1174" textLength="81" lengthAdjust="spacingAndGlyphs">Normal</text><text x="2824" y="1266" textLength="81" lengthAdjust="spacingAndGlyphs">Normal</text><text x="2824" y="1592" textLength="81" lengthAdjust="spacingAndGlyphs">Normal</text><text x="2824" y="1684" textLength="81" lengthAdjust="spacingAndGlyphs">Normal</text><text x="2824" y="1776" textLength="81" lengthAdjust="spacingAndGlyphs">Normal</text><text x="2824" y="1868" textLength="81" lengthAdjust="spacingAndGlyphs">Normal</text>
</g>
<g class="s24 bar" style="color:#fff">
<text x="881" y="898" class="b" textLength="36" lengthAdjust="spacingAndGlyphs">0 B</text><text x="935" y="898" class="m" textLength="48" lengthAdjust="spacingAndGlyphs">ARG</text>
<text x="881" y="990" class="b" textLength="36" lengthAdjust="spacingAndGlyphs">0 B</text><text x="935" y="990" class="m" textLength="48" lengthAdjust="spacingAndGlyphs">ARG</text>
<text x="881" y="1082" class="b" textLength="36" lengthAdjust="spacingAndGlyphs">0 B</text><text x="935" y="1082" class="m" textLength="72" lengthAdjust="spacingAndGlyphs">LABEL</text>
<text x="881" y="1174" class="b" textLength="36" lengthAdjust="spacingAndGlyphs">0 B</text><text x="935" y="1174" class="m" textLength="72" lengthAdjust="spacingAndGlyphs">LABEL</text>
<text x="880" y="1266" class="b" textLength="113" lengthAdjust="spacingAndGlyphs">65.98 MB</text><text x="1011" y="1266" class="m" textLength="49" lengthAdjust="spacingAndGlyphs">ADD</text>
<text x="881" y="1592" class="b" textLength="36" lengthAdjust="spacingAndGlyphs">0 B</text><text x="935" y="1592" class="m" textLength="54" lengthAdjust="spacingAndGlyphs">CMD</text>
<text x="881" y="1684" class="b" textLength="36" lengthAdjust="spacingAndGlyphs">0 B</text><text x="935" y="1684" class="m" textLength="72" lengthAdjust="spacingAndGlyphs">LABEL</text>
<text x="881" y="1776" class="b" textLength="36" lengthAdjust="spacingAndGlyphs">0 B</text><text x="935" y="1776" class="m" textLength="48" lengthAdjust="spacingAndGlyphs">ENV</text>
<text x="880" y="1868" class="b" textLength="111" lengthAdjust="spacingAndGlyphs">87.58 MB</text><text x="1007" y="1868" class="m" textLength="65" lengthAdjust="spacingAndGlyphs">COPY</text>
</g>
<g class="s24">
<text x="773" y="1347" style="color:#62748e" textLength="88" lengthAdjust="spacingAndGlyphs">Created</text>
<text x="773" y="1378" style="color:#0f172a" textLength="198" lengthAdjust="spacingAndGlyphs">28.06.2023 10:42</text>
<text x="1849" y="1347" style="color:#62748e" textLength="46" lengthAdjust="spacingAndGlyphs">Size</text>
<text x="1849" y="1378" class="mono" style="color:#0f172a" textLength="116" lengthAdjust="spacingAndGlyphs">65.98 MB</text>
<text x="773" y="1431" class="m" style="color:#62748e" textLength="115" lengthAdjust="spacingAndGlyphs">Command</text>
</g>
<rect x="773" y="1454" width="2133" height="60" rx="14" fill="#f1f5f9"/>
<text x="789" y="1486" class="mono" style="font-size:24.670px;color:#24292e">/bin/<tspan fill="#0891b2">sh</tspan> <tspan fill="#d08700">-c</tspan> <tspan fill="#6a7380" font-style="italic">#(nop)</tspan> <tspan fill="#155dfc" font-style="italic" font-weight="700">ADD</tspan> <tspan fill="#6a7380" font-style="italic">file:262490f82459c14632f5c9a6d6a5cf6c07b4f307e8fd380fa764662cda46e88f</tspan> <tspan fill="#9810fa" font-style="italic">in</tspan> <tspan fill="#6a7380" font-style="italic">/</tspan></text>
</g>

<rect x="2802" y="1915" width="138" height="67" rx="12" fill="#fff" stroke="#e6eaef" stroke-width="2" style="filter:drop-shadow(0 2px 2px rgba(0,0,0,.05))"/>
<text x="2835" y="1949" class="s27 m" style="color:#0f172a" textLength="73" lengthAdjust="spacingAndGlyphs">Close</text>
</g>
<rect x="112.500" y="75.500" width="3455" height="2052" rx="52" fill="none" stroke="rgba(0,0,0,.22)" stroke-width="1.500"/>
</svg>
</body></html>
